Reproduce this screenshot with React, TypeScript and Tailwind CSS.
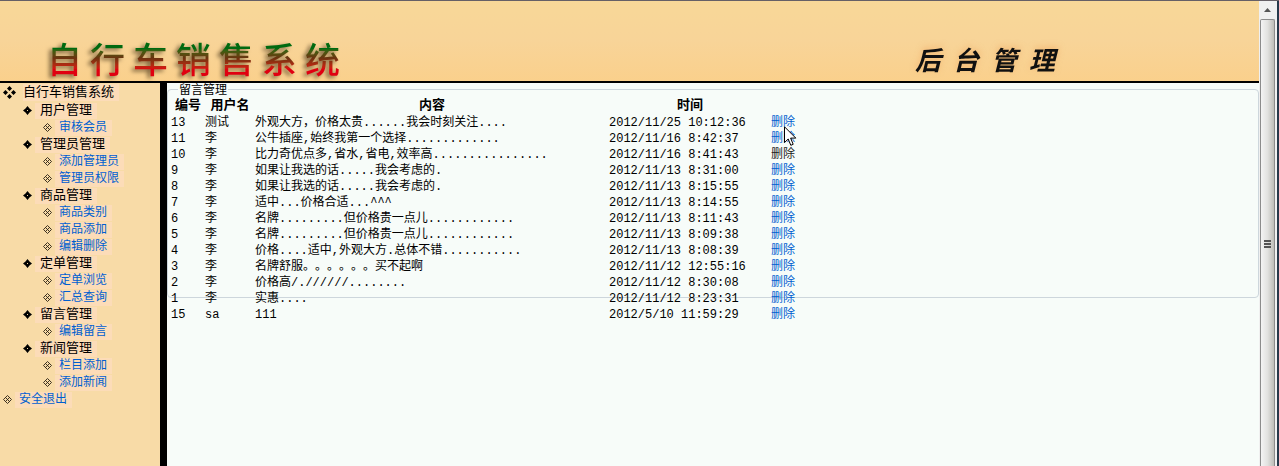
import React from "react";

type Item = { label: string; level: 1 | 2 };
type Message = { id: string; user: string; text: string; time: string; visited?: boolean };

const menu: Item[] = [
  { label: "用户管理", level: 1 },
  { label: "审核会员", level: 2 },
  { label: "管理员管理", level: 1 },
  { label: "添加管理员", level: 2 },
  { label: "管理员权限", level: 2 },
  { label: "商品管理", level: 1 },
  { label: "商品类别", level: 2 },
  { label: "商品添加", level: 2 },
  { label: "编辑删除", level: 2 },
  { label: "定单管理", level: 1 },
  { label: "定单浏览", level: 2 },
  { label: "汇总查询", level: 2 },
  { label: "留言管理", level: 1 },
  { label: "编辑留言", level: 2 },
  { label: "新闻管理", level: 1 },
  { label: "栏目添加", level: 2 },
  { label: "添加新闻", level: 2 },
];

const messages: Message[] = [
  { id: "13", user: "测试", text: "外观大方，价格太贵......我会时刻关注....", time: "2012/11/25 10:12:36" },
  { id: "11", user: "李", text: "公牛插座,始终我第一个选择.............", time: "2012/11/16 8:42:37" },
  { id: "10", user: "李", text: "比力奇优点多,省水,省电,效率高................", time: "2012/11/16 8:41:43", visited: true },
  { id: "9", user: "李", text: "如果让我选的话.....我会考虑的.", time: "2012/11/13 8:31:00" },
  { id: "8", user: "李", text: "如果让我选的话.....我会考虑的.", time: "2012/11/13 8:15:55" },
  { id: "7", user: "李", text: "适中...价格合适...^^^", time: "2012/11/13 8:14:55" },
  { id: "6", user: "李", text: "名牌.........但价格贵一点儿............", time: "2012/11/13 8:11:43" },
  { id: "5", user: "李", text: "名牌.........但价格贵一点儿............", time: "2012/11/13 8:09:38" },
  { id: "4", user: "李", text: "价格....适中,外观大方.总体不错...........", time: "2012/11/13 8:08:39" },
  { id: "3", user: "李", text: "名牌舒服。。。。。。买不起啊", time: "2012/11/12 12:55:16" },
  { id: "2", user: "李", text: "价格高/.//////........", time: "2012/11/12 8:30:08" },
  { id: "1", user: "李", text: "实惠....", time: "2012/11/12 8:23:31" },
  { id: "15", user: "sa", text: "111", time: "2012/5/10 11:59:29" },
];

function RootIcon() {
  return (
    <svg width="13" height="13" viewBox="0 0 13 13" fill="#000" aria-hidden="true">
      <path d="M6.5 0 9 2.5 6.5 5 4 2.5zM6.5 8 9 10.5 6.5 13 4 10.5zM2.5 4 5 6.5 2.5 9 0 6.5zM10.5 4 13 6.5 10.5 9 8 6.5z" />
    </svg>
  );
}

function BranchIcon() {
  return (
    <svg width="9" height="9" viewBox="0 0 9 9" fill="#000" aria-hidden="true">
      <path d="M4.5 0 6.5 2.500 9 4.500 6.500 6.500 4.500 9 2.500 6.500 0 4.500 2.500 2.500z" />
      <path d="M4 4h1v1H4z" fill="#f8dba7" />
    </svg>
  );
}

function LeafIcon() {
  return (
    <svg width="9" height="9" viewBox="0 0 9 9" fill="none" stroke="#2b2115" strokeWidth=".9" aria-hidden="true">
      <path d="M4.500.5 8.500 4.500 4.500 8.500.5 4.500zM2.500 2.500 6.500 6.500M6.500 2.500 2.500 6.500" />
    </svg>
  );
}

function Header() {
  return (
    <header className="flex h-[82px] shrink-0 items-end justify-between border-b-2 border-black bg-linear-to-b from-[#f8d898] via-[#f8d498] to-[#fad08c] pr-[204px] pl-[47px] font-['Noto_Sans_CJK_SC',sans-serif]">
      <h1 aria-label="自行车销售系统" className="flex gap-2 text-[35px] leading-[46px] drop-shadow-[-3px_2px_2px_#3b2a12b0]">
        {[..."自行车销售系统"].map((c) => (
          <span key={c} className="bg-linear-to-b from-[#006a10] from-30% via-[#6b3210] via-50% to-[#e00010] to-75% bg-clip-text font-medium text-transparent">
            {c}
          </span>
        ))}
      </h1>
      <h2 aria-label="后台管理" className="flex gap-3 pb-1 text-[26px] leading-9 font-bold text-[#111] italic drop-shadow-[0_-2px_3px_#ee9a5080]">
        {[..."后台管理"].map((c) => (
          <span key={c}>{c}</span>
        ))}
      </h2>
    </header>
  );
}

function Sidebar() {
  return (
    <nav className="w-[160px] shrink-0 bg-[#f8dba7]">
      <div className="flex h-[18px] items-center pl-[3px]">
        <RootIcon />
        <span className="ml-[7px] bg-[#fcdcb8] pr-[5px] text-[13px] leading-[17px]">自行车销售系统</span>
      </div>
      <ul className="pt-px">
        {menu.map((m) =>
          m.level === 1 ? (
            <li key={m.label} className="flex h-[17px] items-center pl-[23px]">
              <BranchIcon />
              <span className="ml-[3px] bg-[#fcdcb8] px-[5px] text-[13px] leading-4">{m.label}</span>
            </li>
          ) : (
            <li key={m.label} className="flex h-[17px] items-center pl-[43px]">
              <LeafIcon />
              <a href="#" className="ml-[3px] bg-[#fcdcb8] pr-[5px] pl-1 text-[12px] leading-4 text-[#005fd0]">{m.label}</a>
            </li>
          ),
        )}
        <li className="flex h-[17px] items-center pl-[3px]">
          <LeafIcon />
          <a href="#" className="ml-[3px] bg-[#fcdcb8] pr-[5px] pl-1 text-[12px] leading-4 text-[#005fd0]">安全退出</a>
        </li>
      </ul>
    </nav>
  );
}

function Cursor() {
  return (
    <svg className="absolute top-[11px] left-[13px] z-10" width="13" height="21" viewBox="0 0 13 21" aria-hidden="true">
      <path d="M.5.8V16.500L4.200 13 6.800 19.300 9.200 18.300 6.600 12.100H11.800z" fill="#fff" stroke="#000" />
    </svg>
  );
}

function Messages() {
  return (
    <main className="min-w-0 flex-1 bg-[#f7fcf9]">
      <fieldset className="h-[215px] rounded-[4px] border border-[#cdd6dc] px-[3px]">
        <legend className="ml-[7px] h-[13px] px-px text-[12px] leading-4">留言管理</legend>
        <table className="mt-px table-fixed border-collapse text-[12px] whitespace-nowrap [text-spacing-trim:space-all]">
          <colgroup>
            <col className="w-[34px]" />
            <col className="w-[50px]" />
            <col className="w-[354px]" />
            <col className="w-[162px]" />
            <col className="w-[40px]" />
          </colgroup>
          <thead>
            <tr className="h-[18px] text-[13px] leading-[18px]">
              <th className="p-0">编号</th>
              <th className="p-0">用户名</th>
              <th className="p-0">内容</th>
              <th className="p-0">时间</th>
              <th className="p-0" aria-label="操作" />
            </tr>
          </thead>
          <tbody>
            {messages.map((m, i) => (
              <tr key={m.id} className="h-4 leading-4">
                <td className="p-0">{m.id}</td>
                <td className="p-0">{m.user}</td>
                <td className="p-0">{m.text}</td>
                <td className="p-0">{m.time}</td>
                <td className="relative p-0">
                  <a href="#" className={m.visited ? "text-[#222222]" : "text-[#005fd0]"}>删除</a>
                  {i === 0 && <Cursor />}
                </td>
              </tr>
            ))}
          </tbody>
        </table>
      </fieldset>
    </main>
  );
}

function Scrollbar() {
  return (
    <div className="flex w-5 shrink-0 border-r-2 border-[#26384a] bg-[#f0f0f0]" aria-hidden="true">
      <div className="flex w-[17px] flex-col items-center">
        <svg width="7" height="18" viewBox="0 0 7 18">
          <path d="M3.500 7 7 11H0z" fill="#555" />
        </svg>
        <div className="flex w-[15px] flex-1 flex-col items-center rounded-t-[2px] border border-b-0 border-[#8c8c8c] bg-linear-to-r from-[#f4f4f4] via-[#e2e2e0] to-[#bdbdb8]">
          <div className="mt-[220px] flex flex-col gap-px">
            <span className="h-[2px] w-[7px] bg-[#555]" />
            <span className="h-[2px] w-[7px] bg-[#555]" />
            <span className="h-[2px] w-[7px] bg-[#555]" />
          </div>
        </div>
      </div>
    </div>
  );
}

export default function App() {
  return (
    <div className="flex min-h-screen border-t border-[#666066] font-['Liberation_Mono','Noto_Sans_CJK_SC',monospace] text-black">
      <div className="flex min-w-0 flex-1 flex-col">
        <Header />
        <div className="flex flex-1">
          <Sidebar />
          <div className="w-[7px] shrink-0 bg-black" />
          <Messages />
        </div>
      </div>
      <Scrollbar />
    </div>
  );
}
